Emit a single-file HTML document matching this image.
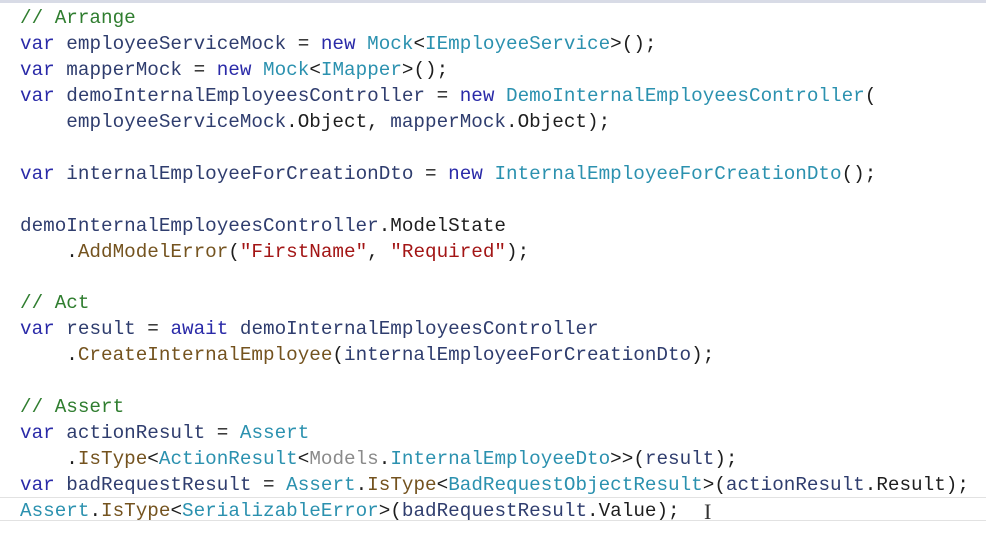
<!DOCTYPE html>
<html><head><meta charset="utf-8"><style>
html,body{margin:0;padding:0;background:#fff;width:986px;height:551px;overflow:hidden}
.top{position:absolute;left:0;top:0;width:986px;height:3px;background:#d8dbe6}
.cur{position:absolute;left:0;top:497px;width:986px;height:24px;border-top:1px solid #e2e2e2;border-bottom:1px solid #e2e2e2;box-sizing:border-box}
pre{position:absolute;left:20px;top:6px;margin:0;font-family:"Liberation Mono",monospace;font-size:19.3px;line-height:25.95px;color:#1e1e1e}
.k{color:#2a2aa8}.v{color:#2f3d6e}.t{color:#2b91af}.c{color:#2f7d2f}.s{color:#a31515}.m{color:#74531f}.g{color:#8a8a8a}
.caret{position:absolute;left:704px;top:499px;font-family:"Liberation Serif",serif;font-size:22px;color:#333}
</style></head><body>
<div class="top"></div><div class="cur"></div>
<pre><span class="c">// Arrange</span>
<span class="k">var</span> <span class="v">employeeServiceMock</span> = <span class="k">new</span> <span class="t">Mock</span>&lt;<span class="t">IEmployeeService</span>&gt;();
<span class="k">var</span> <span class="v">mapperMock</span> = <span class="k">new</span> <span class="t">Mock</span>&lt;<span class="t">IMapper</span>&gt;();
<span class="k">var</span> <span class="v">demoInternalEmployeesController</span> = <span class="k">new</span> <span class="t">DemoInternalEmployeesController</span>(
    <span class="v">employeeServiceMock</span>.Object, <span class="v">mapperMock</span>.Object);

<span class="k">var</span> <span class="v">internalEmployeeForCreationDto</span> = <span class="k">new</span> <span class="t">InternalEmployeeForCreationDto</span>();

<span class="v">demoInternalEmployeesController</span>.ModelState
    .<span class="m">AddModelError</span>(<span class="s">"FirstName"</span>, <span class="s">"Required"</span>);

<span class="c">// Act</span>
<span class="k">var</span> <span class="v">result</span> = <span class="k">await</span> <span class="v">demoInternalEmployeesController</span>
    .<span class="m">CreateInternalEmployee</span>(<span class="v">internalEmployeeForCreationDto</span>);

<span class="c">// Assert</span>
<span class="k">var</span> <span class="v">actionResult</span> = <span class="t">Assert</span>
    .<span class="m">IsType</span>&lt;<span class="t">ActionResult</span>&lt;<span class="g">Models</span>.<span class="t">InternalEmployeeDto</span>&gt;&gt;(<span class="v">result</span>);
<span class="k">var</span> <span class="v">badRequestResult</span> = <span class="t">Assert</span>.<span class="m">IsType</span>&lt;<span class="t">BadRequestObjectResult</span>&gt;(<span class="v">actionResult</span>.Result);
<span class="t">Assert</span>.<span class="m">IsType</span>&lt;<span class="t">SerializableError</span>&gt;(<span class="v">badRequestResult</span>.Value);</pre>
<div class="caret">I</div>
</body></html>
